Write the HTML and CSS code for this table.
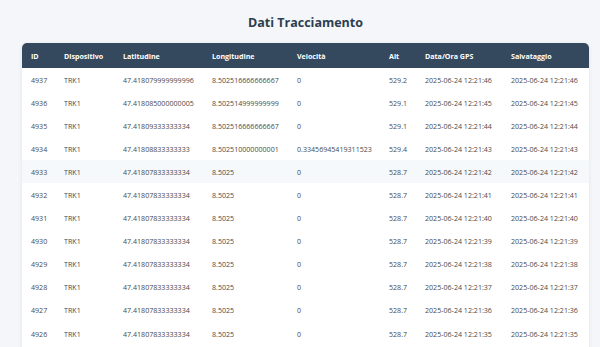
FILE: index.html
```html
<!DOCTYPE html>
<html lang="it">
<head>
  <meta charset="UTF-8" />
  <title>Dati Tracciamento</title>
  <link rel="stylesheet" href="styles.css">
</head>
<body>
  <div class="wrap">
    <h1>Dati Tracciamento</h1>
    <table class="track-table">
      <thead>
        <tr>
          <th class="c-id">ID</th>
          <th class="c-dev">Dispositivo</th>
          <th class="c-lat">Latitudine</th>
          <th class="c-lon">Longitudine</th>
          <th class="c-vel">Velocità</th>
          <th class="c-alt">Alt</th>
          <th class="c-gps">Data/Ora GPS</th>
          <th class="c-save">Salvataggio</th>
        </tr>
      </thead>
      <tbody>
        <tr><td>4937</td><td>TRK1</td><td>47.418079999999996</td><td>8.502516666666667</td><td>0</td><td>529.2</td><td>2025-06-24 12:21:46</td><td>2025-06-24 12:21:46</td></tr>
        <tr><td>4936</td><td>TRK1</td><td>47.418085000000005</td><td>8.502514999999999</td><td>0</td><td>529.1</td><td>2025-06-24 12:21:45</td><td>2025-06-24 12:21:45</td></tr>
        <tr><td>4935</td><td>TRK1</td><td>47.41809333333334</td><td>8.502516666666667</td><td>0</td><td>529.1</td><td>2025-06-24 12:21:44</td><td>2025-06-24 12:21:44</td></tr>
        <tr><td>4934</td><td>TRK1</td><td>47.41808833333333</td><td>8.502510000000001</td><td>0.33456945419311523</td><td>529.4</td><td>2025-06-24 12:21:43</td><td>2025-06-24 12:21:43</td></tr>
        <tr class="hover"><td>4933</td><td>TRK1</td><td>47.41807833333334</td><td>8.5025</td><td>0</td><td>528.7</td><td>2025-06-24 12:21:42</td><td>2025-06-24 12:21:42</td></tr>
        <tr><td>4932</td><td>TRK1</td><td>47.41807833333334</td><td>8.5025</td><td>0</td><td>528.7</td><td>2025-06-24 12:21:41</td><td>2025-06-24 12:21:41</td></tr>
        <tr><td>4931</td><td>TRK1</td><td>47.41807833333334</td><td>8.5025</td><td>0</td><td>528.7</td><td>2025-06-24 12:21:40</td><td>2025-06-24 12:21:40</td></tr>
        <tr><td>4930</td><td>TRK1</td><td>47.41807833333334</td><td>8.5025</td><td>0</td><td>528.7</td><td>2025-06-24 12:21:39</td><td>2025-06-24 12:21:39</td></tr>
        <tr><td>4929</td><td>TRK1</td><td>47.41807833333334</td><td>8.5025</td><td>0</td><td>528.7</td><td>2025-06-24 12:21:38</td><td>2025-06-24 12:21:38</td></tr>
        <tr><td>4928</td><td>TRK1</td><td>47.41807833333334</td><td>8.5025</td><td>0</td><td>528.7</td><td>2025-06-24 12:21:37</td><td>2025-06-24 12:21:37</td></tr>
        <tr><td>4927</td><td>TRK1</td><td>47.41807833333334</td><td>8.5025</td><td>0</td><td>528.7</td><td>2025-06-24 12:21:36</td><td>2025-06-24 12:21:36</td></tr>
        <tr><td>4926</td><td>TRK1</td><td>47.41807833333334</td><td>8.5025</td><td>0</td><td>528.7</td><td>2025-06-24 12:21:35</td><td>2025-06-24 12:21:35</td></tr>
      </tbody>
    </table>
  </div>
</body>
</html>
```

FILE: styles.css
```css
* {
  margin: 0;
  padding: 0;
  box-sizing: border-box;
}
body {
  background-color: #f4f6f9;
  color: #4a4a4a;
  font-family: "Open Sans", "Noto Sans", sans-serif;
}
.wrap {
  width: 567px;
  margin-left: 22px;
}
h1 {
  font-size: 12.5px;
  font-weight: bold;
  color: #2c3e50;
  text-align: center;
  line-height: 20px;
  padding-top: 13px;
  margin-bottom: 10px;
}
/* Table */
.track-table {
  width: 567px;
  border-collapse: separate;
  border-spacing: 0;
  table-layout: fixed;
  background-color: #fff;
  border-radius: 5px 5px 0 0;
  overflow: hidden;
  box-shadow: 0 1px 4px rgba(0,0,0,0.08);
  font-size: 7.1px;
}
.track-table th {
  background-color: #34495e;
  color: #fff;
  font-weight: bold;
  text-align: left;
  height: 25px;
  padding: 0 9px;
  white-space: nowrap;
}
.track-table td {
  height: 23.1px;
  padding: 0 9px;
  white-space: nowrap;
}
/* table runs on past the fold */
.track-table tbody tr:last-child td {
  height: 30.1px;
  padding-bottom: 7px;
}
.track-table tr.hover td {
  background-color: #f5f9fc;
}
.c-id { width: 33px; }
.c-dev { width: 59px; }
.c-lat { width: 89px; }
.c-lon { width: 85px; }
.c-vel { width: 92px; }
.c-alt { width: 36px; }
.c-gps { width: 86px; }
.c-save { width: 87px; }
```
